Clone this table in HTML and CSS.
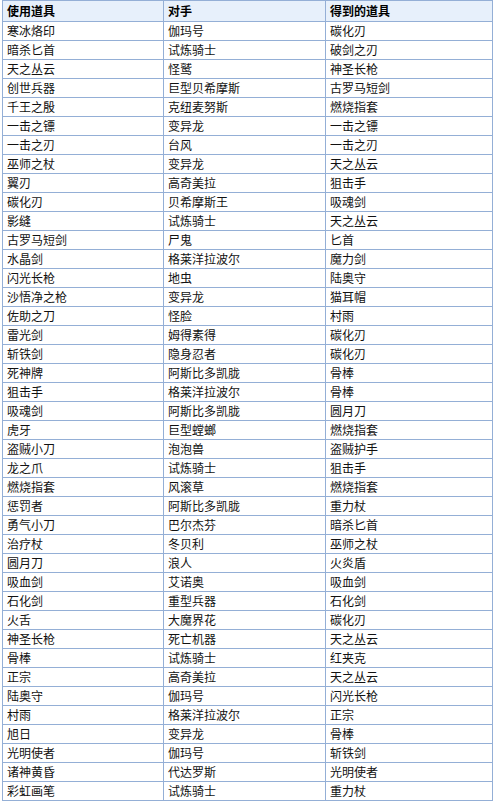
FILE: index.html
```html
<!DOCTYPE html>
<html lang="zh-CN">
<head>
<meta charset="utf-8">
<title>道具交换表</title>
<link rel="stylesheet" href="styles.css">
</head>
<body>
<table class="trade">
<colgroup><col class="c1"><col class="c2"><col class="c3"></colgroup>
<thead>
<tr class="head"><th>使用道具</th><th>对手</th><th>得到的道具</th></tr>
</thead>
<tbody>
<tr><td>寒冰烙印</td><td>伽玛号</td><td>碳化刃</td></tr>
<tr><td>暗杀匕首</td><td>试炼骑士</td><td>破剑之刃</td></tr>
<tr><td>天之丛云</td><td>怪鹫</td><td>神圣长枪</td></tr>
<tr><td>创世兵器</td><td>巨型贝希摩斯</td><td>古罗马短剑</td></tr>
<tr><td>千王之殷</td><td>克纽麦努斯</td><td>燃烧指套</td></tr>
<tr><td>一击之镖</td><td>变异龙</td><td>一击之镖</td></tr>
<tr><td>一击之刃</td><td>台风</td><td>一击之刃</td></tr>
<tr><td>巫师之杖</td><td>变异龙</td><td>天之丛云</td></tr>
<tr><td>翼刃</td><td>高奇美拉</td><td>狙击手</td></tr>
<tr><td>碳化刃</td><td>贝希摩斯王</td><td>吸魂剑</td></tr>
<tr><td>影缝</td><td>试炼骑士</td><td>天之丛云</td></tr>
<tr><td>古罗马短剑</td><td>尸鬼</td><td>匕首</td></tr>
<tr><td>水晶剑</td><td>格莱洋拉波尔</td><td>魔力剑</td></tr>
<tr><td>闪光长枪</td><td>地虫</td><td>陆奥守</td></tr>
<tr><td>沙悟净之枪</td><td>变异龙</td><td>猫耳帽</td></tr>
<tr><td>佐助之刀</td><td>怪脸</td><td>村雨</td></tr>
<tr><td>雷光剑</td><td>姆得素得</td><td>碳化刃</td></tr>
<tr><td>斩铁剑</td><td>隐身忍者</td><td>碳化刃</td></tr>
<tr><td>死神牌</td><td>阿斯比多凯胧</td><td>骨棒</td></tr>
<tr><td>狙击手</td><td>格莱洋拉波尔</td><td>骨棒</td></tr>
<tr><td>吸魂剑</td><td>阿斯比多凯胧</td><td>圆月刀</td></tr>
<tr><td>虎牙</td><td>巨型螳螂</td><td>燃烧指套</td></tr>
<tr><td>盗贼小刀</td><td>泡泡兽</td><td>盗贼护手</td></tr>
<tr><td>龙之爪</td><td>试炼骑士</td><td>狙击手</td></tr>
<tr><td>燃烧指套</td><td>风滚草</td><td>燃烧指套</td></tr>
<tr><td>惩罚者</td><td>阿斯比多凯胧</td><td>重力杖</td></tr>
<tr><td>勇气小刀</td><td>巴尔杰芬</td><td>暗杀匕首</td></tr>
<tr><td>治疗杖</td><td>冬贝利</td><td>巫师之杖</td></tr>
<tr><td>圆月刀</td><td>浪人</td><td>火炎盾</td></tr>
<tr><td>吸血剑</td><td>艾诺奥</td><td>吸血剑</td></tr>
<tr><td>石化剑</td><td>重型兵器</td><td>石化剑</td></tr>
<tr><td>火舌</td><td>大魔界花</td><td>碳化刃</td></tr>
<tr><td>神圣长枪</td><td>死亡机器</td><td>天之丛云</td></tr>
<tr><td>骨棒</td><td>试炼骑士</td><td>红夹克</td></tr>
<tr><td>正宗</td><td>高奇美拉</td><td>天之丛云</td></tr>
<tr><td>陆奥守</td><td>伽玛号</td><td>闪光长枪</td></tr>
<tr><td>村雨</td><td>格莱洋拉波尔</td><td>正宗</td></tr>
<tr><td>旭日</td><td>变异龙</td><td>骨棒</td></tr>
<tr><td>光明使者</td><td>伽玛号</td><td>斩铁剑</td></tr>
<tr><td>诸神黄昏</td><td>代达罗斯</td><td>光明使者</td></tr>
<tr><td>彩虹画笔</td><td>试炼骑士</td><td>重力杖</td></tr>
</tbody>
</table>
</body>
</html>
```
FILE: styles.css
```css
html, body {
  margin: 0;
  padding: 0;
  background: #ffffff;
}
body {
  padding-left: 2px;
  font-family: "Noto Sans CJK SC", "Noto Sans", sans-serif;
  font-size: 12px;
  color: #111111;
}
.trade {
  border-collapse: collapse;
  table-layout: fixed;
  width: 490px;
}
.c1 { width: 161px; }
.c2 { width: 162px; }
.c3 { width: 167px; }
.trade th,
.trade td {
  border: 1px solid #94afd6;
  padding: 0 4px;
  text-align: left;
  line-height: 16px;
  white-space: nowrap;
  overflow: hidden;
}
.trade tr { height: 19px; }
.trade tr.head { height: 21px; }
.trade th {
  background: #e7f0fb;
  font-weight: bold;
  color: #000000;
}
```
